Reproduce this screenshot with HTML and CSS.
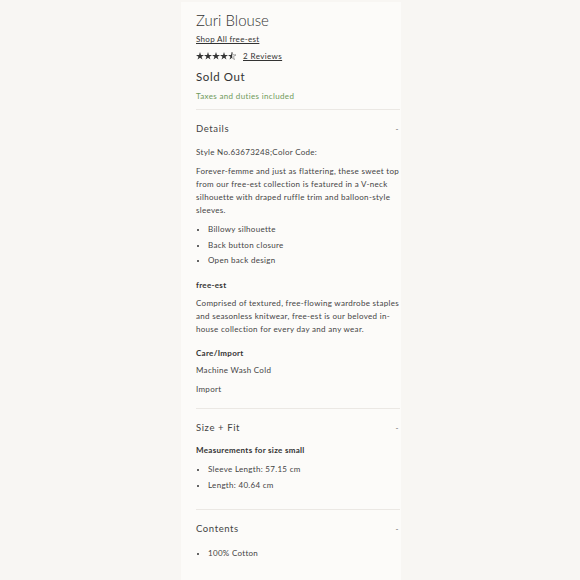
FILE: index.html
```html
<!DOCTYPE html>
<html>
<head>
<meta charset="utf-8">
<link rel="stylesheet" href="styles.css">
</head>
<body>
<main class="panel">
  <h1 class="title">Zuri Blouse</h1>
  <a class="shop" href="#">Shop All free-est</a>
  <div class="rating">
    <span class="stars">
      <svg viewBox="0 0 50 10" width="40" height="8">
        <g fill="#333">
          <polygon points="5,0 6.2,3.6 10,3.6 6.9,5.8 8.1,9.5 5,7.2 1.9,9.5 3.1,5.8 0,3.6 3.8,3.6"/>
          <polygon transform="translate(10,0)" points="5,0 6.2,3.6 10,3.6 6.9,5.8 8.1,9.5 5,7.2 1.9,9.5 3.1,5.8 0,3.6 3.8,3.6"/>
          <polygon transform="translate(20,0)" points="5,0 6.2,3.6 10,3.6 6.9,5.8 8.1,9.5 5,7.2 1.9,9.5 3.1,5.8 0,3.6 3.8,3.6"/>
          <polygon transform="translate(30,0)" points="5,0 6.2,3.6 10,3.6 6.9,5.8 8.1,9.5 5,7.2 1.9,9.5 3.1,5.8 0,3.6 3.8,3.6"/>
          <polygon transform="translate(40,0)" points="5,0 5,7.2 1.9,9.5 3.1,5.8 0,3.6 3.8,3.6"/>
          <polygon transform="translate(40,0)" fill="none" stroke="#333" stroke-width="0.5" points="5,0 6.2,3.6 10,3.6 6.9,5.8 8.1,9.5 5,7.2"/>
        </g>
      </svg>
    </span>
    <a class="reviews" href="#">2 Reviews</a>
  </div>
  <div class="price">Sold Out</div>
  <div class="tax">Taxes and duties included</div>

  <section class="acc">
    <div class="acc-head"><span>Details</span><span class="dash">-</span></div>
    <div class="acc-body">
      <p class="style">Style No.63673248;Color Code:</p>
      <p>Forever-femme and just as flattering, these sweet top from our free-est collection is featured in a V-neck silhouette with draped ruffle trim and balloon-style sleeves.</p>
      <ul>
        <li>Billowy silhouette</li>
        <li>Back button closure</li>
        <li>Open back design</li>
      </ul>
      <h3>free-est</h3>
      <p>Comprised of textured, free-flowing wardrobe staples and seasonless knitwear, free-est is our beloved in-house collection for every day and any wear.</p>
      <h3 class="care">Care/Import</h3>
      <p class="line">Machine Wash Cold</p>
      <p class="line last">Import</p>
    </div>
  </section>

  <section class="acc">
    <div class="acc-head"><span>Size + Fit</span><span class="dash">-</span></div>
    <div class="acc-body size">
      <h3 class="meas">Measurements for size small</h3>
      <ul class="last">
        <li>Sleeve Length: 57.15 cm</li>
        <li>Length: 40.64 cm</li>
      </ul>
    </div>
  </section>

  <section class="acc">
    <div class="acc-head"><span>Contents</span><span class="dash">-</span></div>
    <div class="acc-body">
      <ul class="last">
        <li>100% Cotton</li>
      </ul>
    </div>
  </section>
</main>
</body>
</html>
```

FILE: styles.css
```css
html, body {
  margin: 0;
  padding: 0;
  background: #f8f6f3;
  height: 580px;
  overflow: hidden;
}
body {
  font-family: "Lato", "Liberation Sans", sans-serif;
  color: #3c3c3c;
}
.panel {
  margin: 2px 0 0 181px;
  width: 204px;
  min-height: 578px;
  background: #fcfbf9;
  padding: 9px 1px 0 15px;
  box-sizing: content-box;
}
.title {
  font-family: "Lato", sans-serif;
  font-weight: 300;
  font-size: 15px;
  line-height: 18px;
  margin: 0;
  color: #333;
}
.shop {
  display: block;
  margin-top: 4px;
  font-size: 8px;
  line-height: 12px;
  color: #333;
  letter-spacing: 0.3px;
  text-decoration: underline;
}
.rating {
  display: flex;
  align-items: center;
  gap: 7px;
  margin-top: 5px;
  height: 12px;
}
.stars svg { display: block; }
.reviews {
  font-size: 8px;
  color: #333;
  letter-spacing: 0.4px;
  text-decoration: underline;
}
.price {
  margin-top: 7px;
  font-size: 11.5px;
  line-height: 16px;
  letter-spacing: 0.6px;
  color: #333;
}
.tax {
  margin-top: 5px;
  font-size: 8px;
  line-height: 12px;
  color: #6f9a5a;
  letter-spacing: 0.35px;
}
.acc {
  border-top: 1px solid #ebe8e4;
}
.acc:first-of-type { margin-top: 7px; }
.acc-head {
  display: flex;
  justify-content: space-between;
  align-items: center;
  height: 37px;
  font-size: 9.5px;
  letter-spacing: 0.6px;
  color: #444;
}
.dash { font-size: 8px; color: #666; padding-right: 1px; }
.acc-body {
  padding-bottom: 12px;
  font-size: 8px;
  letter-spacing: 0.3px;
  color: #444;
}
.acc-body p {
  margin: 0 0 6px;
  line-height: 13px;
}
.acc-body p.style { margin-top: -1px; margin-bottom: 6px; }
.acc-body ul {
  margin: 0 0 12px;
  padding-left: 12px;
}
.acc-body li {
  line-height: 13px;
  margin-bottom: 2.5px;
}
.acc-body li::marker { font-size: 7.5px; color: #333; }
.acc-body h3 {
  font-size: 8px;
  font-weight: 700;
  line-height: 13px;
  margin: 0 0 5px;
  color: #333;
}
.acc-body h3.care { margin-top: 11px; margin-bottom: 4px; }
.acc-body p.line { margin-bottom: 6px; }
.acc-body p.line.last,
.acc-body ul.last,
.acc-body ul.last li:last-child { margin-bottom: 0; }
.acc-body h3.meas { margin-top: -2px; margin-bottom: 6px; }
.acc-body.size { padding-bottom: 17px; }
.acc-body.size li { margin-bottom: 3px; }
```
